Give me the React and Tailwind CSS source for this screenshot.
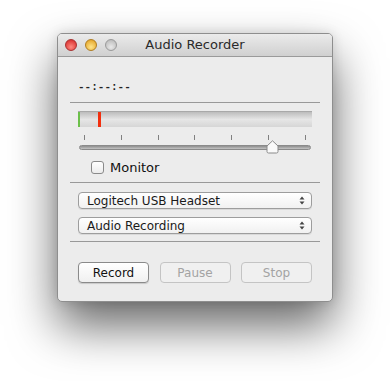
import React from 'react'

const FONT = { fontFamily: '"DejaVu Sans", "Liberation Sans", sans-serif' }

function Light({ from, to, ring }) {
  return (
    <div
      className="w-[12px] h-[12px] rounded-full border"
      style={{ background: `radial-gradient(circle at 50% 70%, ${from}, ${to})`, borderColor: ring }}
    />
  )
}

function Separator() {
  return <div className="mx-[12px] h-px bg-[#999]" />
}

function Popup({ label }) {
  return (
    <div className="mx-[20px] h-[17px] rounded-[4px] border border-[#9d9d9d] bg-gradient-to-b from-white to-[#f1f1f1] shadow-[0_1px_0_rgba(0,0,0,0.08)] flex items-center justify-between pl-[8px] pr-[6px]">
      <span className="text-[12px] text-[#1a1a1a] leading-none">{label}</span>
      <svg width="6" height="9" viewBox="0 0 6 9">
        <path d="M0.5 3.5 L3 0.5 L5.5 3.5 Z" fill="#444" />
        <path d="M0.5 5.5 L3 8.5 L5.5 5.5 Z" fill="#444" />
      </svg>
    </div>
  )
}

function Button({ label, disabled }) {
  return (
    <div
      className={`w-[71px] h-[21px] rounded-[4px] border flex items-center justify-center text-[12px] leading-none ${
        disabled
          ? 'border-[#c4c4c4] bg-[#f0f0f0] text-[#a3a3a3]'
          : 'border-[#8a8a8a] bg-gradient-to-b from-white to-[#f0f0f0] text-[#111] shadow-[0_1px_1px_rgba(0,0,0,0.15)]'
      }`}
    >
      {label}
    </div>
  )
}

export default function App() {
  const ticks = [0, 1, 2, 3, 4, 5, 6]
  return (
    <div className="w-[390px] h-[381px] bg-white flex pt-[33px] pl-[57px]" style={FONT}>
      <div className="w-[276px] h-[269px] rounded-[5px] bg-[#ececec] border border-[#8e8e8e] shadow-[0_24px_48px_rgba(0,0,0,0.6),0_0_12px_rgba(0,0,0,0.12)] flex flex-col overflow-hidden">
        <div className="h-[23px] bg-gradient-to-b from-[#ebebeb] to-[#d0d0d0] border-b border-[#9a9a9a] flex items-center relative">
          <div className="flex gap-[8px] pl-[7px]">
            <Light from="#ff8a80" to="#d21f1f" ring="#a83030" />
            <Light from="#ffe58a" to="#e09a18" ring="#b07d20" />
            <Light from="#e9e9e9" to="#b3b3b3" ring="#9a9a9a" />
          </div>
          <div className="absolute inset-0 flex items-center justify-center text-[13px] text-[#2a2a2a]">
            Audio Recorder
          </div>
        </div>

        <div className="flex flex-col">
          <div className="h-[45px] flex items-end pl-[20px] pb-[9px]">
            <span className="text-[11px] font-bold text-[#222] leading-none" style={{ fontFamily: '"Liberation Mono", monospace' }}>
              --:--:--
            </span>
          </div>
          <Separator />

          <div className="mt-[8px] mx-[20px] h-[16px] relative bg-gradient-to-b from-[#bdbdbd] via-[#e6e6e6] to-[#d6d6d6] border-t border-[#a9a9a9]">
            <div className="absolute left-0 top-0 bottom-0 w-[2px] bg-[#6cc04a]" />
            <div className="absolute left-[20px] top-0 bottom-0 w-[3px] bg-[#f2300f]" />
          </div>

          <div className="mx-[21px] mt-[8px] h-[5px] flex justify-between pl-[5px] pr-[5px]">
            {ticks.map(t => (
              <div key={t} className="w-px h-[5px] bg-[#808080]" />
            ))}
          </div>
          <div className="mx-[21px] mt-[1px] h-[13px] relative flex items-center">
            <div className="w-full h-[5px] rounded-full bg-gradient-to-b from-[#8e8e8e] to-[#c4c4c4] border border-[#8a8a8a]" />
            <svg className="absolute left-[187px] top-[-1px]" width="13" height="14" viewBox="0 0 13 14">
              <path d="M1 6 L6.5 0.8 L12 6 L12 11.5 Q12 13 10.5 13 L2.5 13 Q1 13 1 11.5 Z" fill="#fafafa" stroke="#8a8a8a" strokeWidth="1" />
            </svg>
          </div>

          <div className="mt-[6px] pl-[33px] flex items-center gap-[6px] h-[14px]">
            <div className="w-[13px] h-[13px] rounded-[3px] border border-[#8a8a8a] bg-gradient-to-b from-white to-[#ececec]" />
            <span className="text-[13px] text-[#111] leading-none">Monitor</span>
          </div>

          <div className="mt-[8px]" />
          <Separator />

          <div className="mt-[9px] flex flex-col gap-[8px]">
            <Popup label="Logitech USB Headset" />
            <Popup label="Audio Recording" />
          </div>

          <div className="mt-[7px]" />
          <Separator />

          <div className="mt-[20px] mx-[20px] flex justify-between">
            <Button label="Record" />
            <Button label="Pause" disabled />
            <Button label="Stop" disabled />
          </div>
        </div>
      </div>
    </div>
  )
}
